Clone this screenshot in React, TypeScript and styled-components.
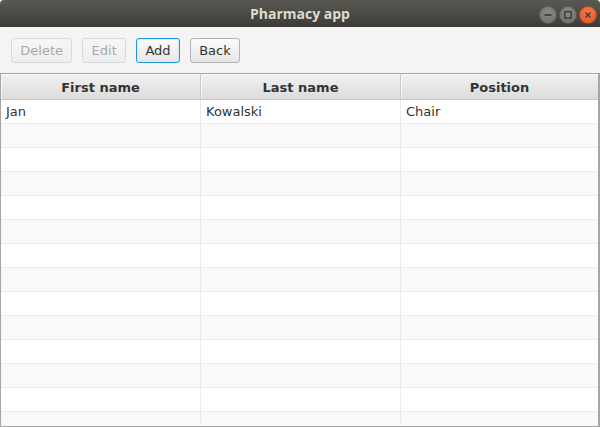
import React from "react";
import styled, { createGlobalStyle } from "styled-components";

const Global = createGlobalStyle`
  html, body { margin: 0; padding: 0; background: #f4f4f4; }
  body { width: 600px; height: 427px; overflow: hidden; font-family: "DejaVu Sans", sans-serif; }
`;

const Window = styled.div`
  width: 600px;
  height: 427px;
  display: flex;
  flex-direction: column;
  background: #f4f4f4;
  overflow: hidden;
`;

const TitleBar = styled.div`
  height: 27px;
  flex: none;
  background: linear-gradient(#5a5852, #3d3c38);
  display: flex;
  align-items: center;
  justify-content: center;
  position: relative;
  border-radius: 4px 4px 0 0;
`;

const Title = styled.span`
  color: #dfdbd2;
  font-family: "Open Sans", "DejaVu Sans", sans-serif;
  font-weight: 700;
  font-size: 14px;
  margin-top: -1px;
`;

const Controls = styled.div`
  position: absolute;
  right: 3px;
  top: 6px;
  display: flex;
  gap: 2px;
`;

const Ctrl = styled.div<{ $close?: boolean }>`
  width: 18px;
  height: 18px;
  border-radius: 50%;
  background: ${(p) =>
    p.$close
      ? "radial-gradient(circle at 50% 35%, #f47a4a, #e0511d)"
      : "radial-gradient(circle at 50% 35%, #8a8984, #6b6a65)"};
  box-shadow: inset 0 0 0 1px rgba(0,0,0,0.25);
  display: flex;
  align-items: center;
  justify-content: center;
`;

const Toolbar = styled.div`
  height: 46px;
  flex: none;
  display: flex;
  align-items: center;
  gap: 10px;
  padding: 1px 11px 0;
  box-sizing: border-box;
`;

const Button = styled.button<{ $focused?: boolean }>`
  height: 25px;
  padding: 0 8.3px;
  font-family: "DejaVu Sans", sans-serif;
  font-size: 13px;
  color: #333;
  background: linear-gradient(#fbfbfb, #e6e6e6);
  border: 1px solid ${(p) => (p.$focused ? "#1e9ad6" : "#b3b3b3")};
  box-shadow: ${(p) => (p.$focused ? "inset 0 0 0 1px #cfe9f6" : "none")};
  border-radius: 3px;
  box-sizing: border-box;
  line-height: 1;
  &:disabled { opacity: 0.4; }
`;

const Table = styled.div`
  flex: 1;
  border: 1px solid #a5a5a5;
  border-right-width: 2px;
  background: #fff;
  display: flex;
  flex-direction: column;
  overflow: hidden;
`;

const Row = styled.div<{ $alt?: boolean }>`
  display: grid;
  grid-template-columns: 200px 200px 1fr;
  height: 24px;
  flex: none;
  background: ${(p) => (p.$alt ? "#f9f9f9" : "#ffffff")};
`;

const HeaderRow = styled(Row)`
  height: 26px;
  background: linear-gradient(#f1f1f1, #dcdcdc);
  border-bottom: 1px solid #c8c8c8;
  box-sizing: border-box;
`;

const HeadCell = styled.div`
  display: flex;
  align-items: center;
  justify-content: center;
  padding-top: 2px;
  box-sizing: border-box;
  font-weight: 700;
  font-size: 13px;
  color: #333;
  border-right: 1px solid #c8c8c8;
  box-shadow: inset 1px 1px 0 rgba(255,255,255,0.7);
  &:last-child { border-right: none; }
`;

const Cell = styled.div`
  display: flex;
  align-items: center;
  padding-left: 5px;
  font-size: 13px;
  color: #333;
  border-right: 1px solid #ececec;
  border-bottom: 1px solid #ececec;
  box-sizing: border-box;
  &:last-child { border-right: none; }
`;

const rows = [["Jan", "Kowalski", "Chair"]];
for (let i = 0; i < 13; i++) rows.push(["", "", ""]);

export default function App() {
  return (
    <Window>
      <Global />
      <TitleBar>
        <Title>Pharmacy app</Title>
        <Controls>
          <Ctrl>
            <svg width="10" height="10" viewBox="0 0 10 10"><path d="M1.5 5h7" stroke="#3b3a36" strokeWidth="1.6" /></svg>
          </Ctrl>
          <Ctrl>
            <svg width="10" height="10" viewBox="0 0 10 10"><rect x="1.8" y="1.8" width="6.4" height="6.4" fill="none" stroke="#3b3a36" strokeWidth="1.4" /></svg>
          </Ctrl>
          <Ctrl $close>
            <svg width="10" height="10" viewBox="0 0 10 10"><path d="M2.5 2.5l5 5M7.5 2.5l-5 5" stroke="#3b3a36" strokeWidth="1.4" /></svg>
          </Ctrl>
        </Controls>
      </TitleBar>
      <Toolbar>
        <Button disabled>Delete</Button>
        <Button disabled>Edit</Button>
        <Button $focused>Add</Button>
        <Button>Back</Button>
      </Toolbar>
      <Table>
        <HeaderRow>
          <HeadCell>First name</HeadCell>
          <HeadCell>Last name</HeadCell>
          <HeadCell>Position</HeadCell>
        </HeaderRow>
        {rows.map((r, i) => (
          <Row key={i} $alt={i % 2 === 1}>
            <Cell>{r[0]}</Cell>
            <Cell>{r[1]}</Cell>
            <Cell>{r[2]}</Cell>
          </Row>
        ))}
      </Table>
    </Window>
  );
}
